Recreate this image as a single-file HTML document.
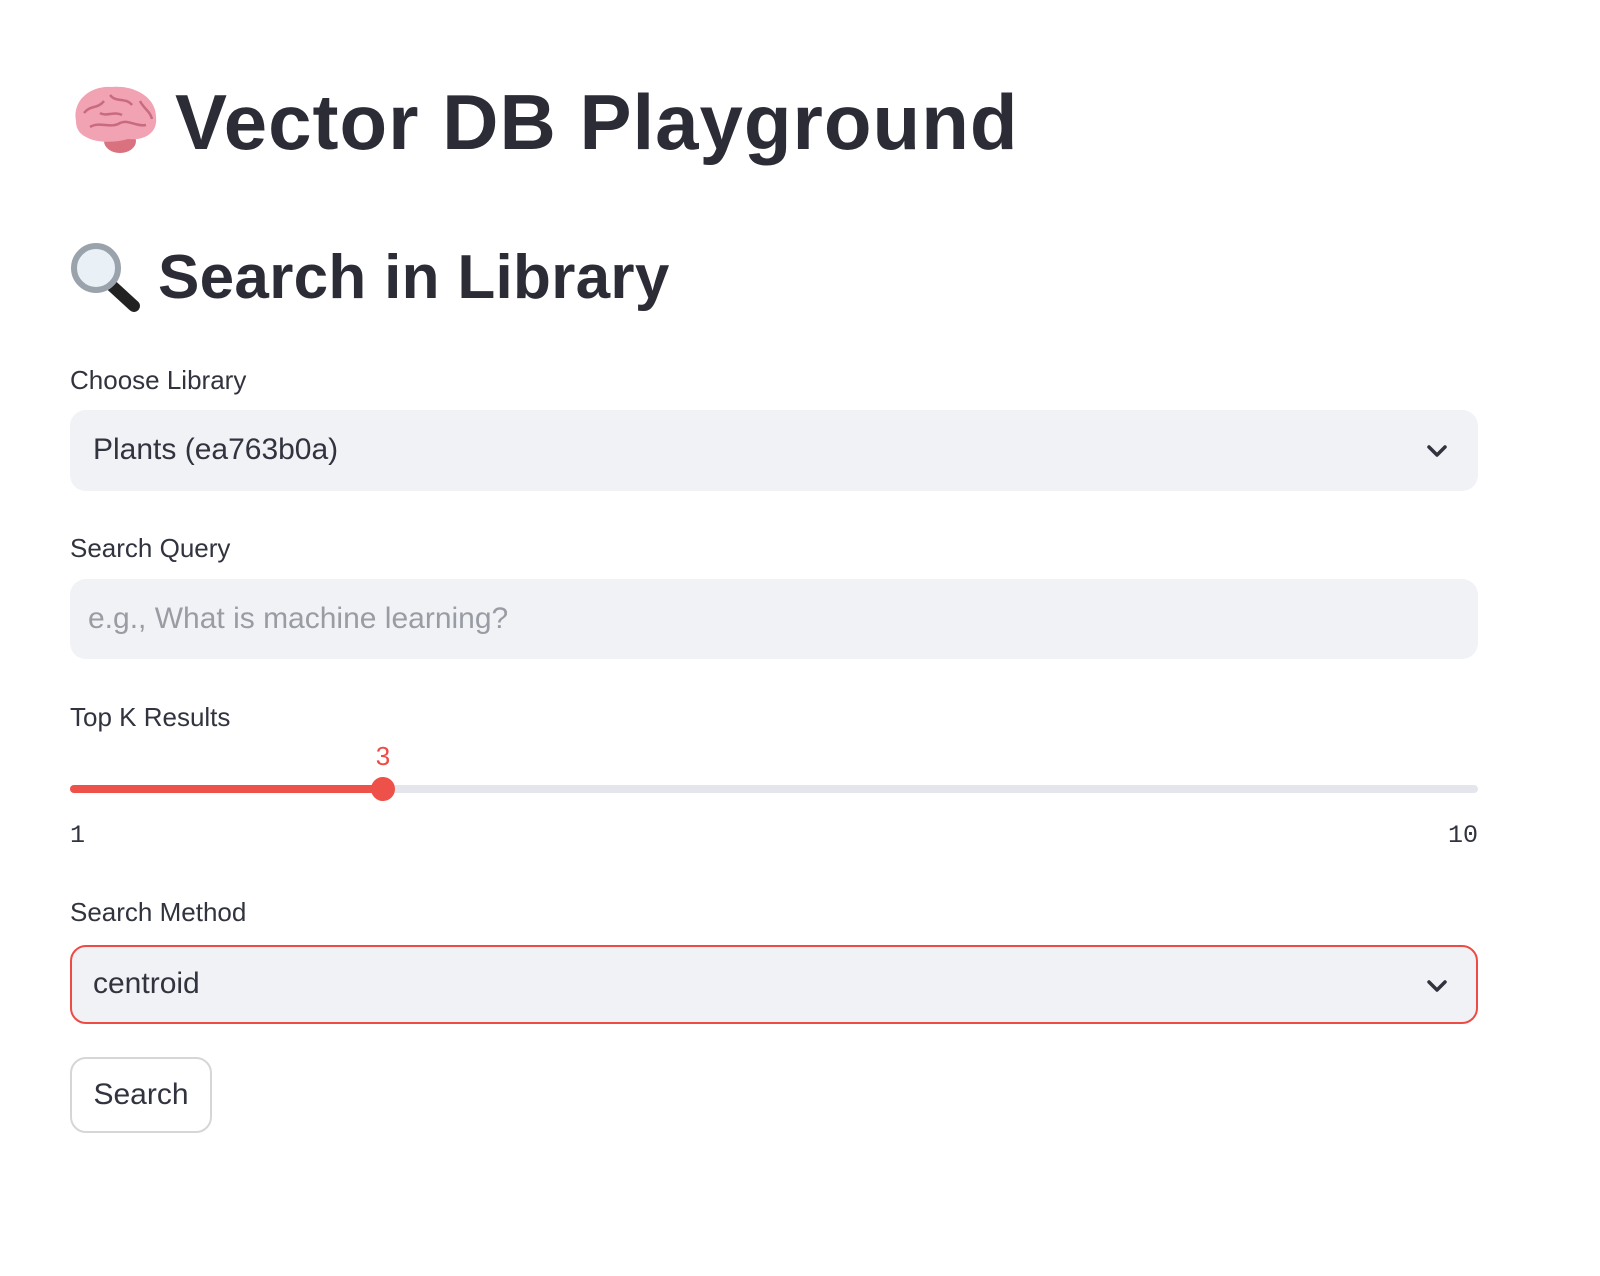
<!DOCTYPE html>
<html><head><meta charset="utf-8">
<style>
html,body{margin:0;padding:0;background:#fff;width:1600px;height:1276px;overflow:hidden;}
body{font-family:"Liberation Sans",sans-serif;color:#31333f;position:relative;}
.a{position:absolute;}
h1{position:absolute;left:175px;top:72px;margin:0;font-size:78px;font-weight:700;letter-spacing:1px;line-height:100px;color:#2b2c36;}
h2{position:absolute;left:158px;top:238px;margin:0;font-size:62px;font-weight:700;letter-spacing:0.3px;line-height:80px;color:#2b2c36;}
.lbl{position:absolute;left:70px;font-size:26px;line-height:30px;color:#31333f;}
.box{position:absolute;left:70px;width:1408px;background:#f0f2f6;border-radius:16px;box-sizing:border-box;}
.val{position:absolute;left:23px;font-size:30px;line-height:36px;color:#31333f;}
.chev{position:absolute;right:30px;}
.mono{font-family:"Liberation Mono",monospace;font-size:25px;color:#31333f;position:absolute;}
</style></head><body>

<svg class="a" style="left:70px;top:83px" width="88" height="72" viewBox="0 0 88 72">
 <ellipse cx="50" cy="58" rx="16" ry="12" fill="#d9717f"/>
 <path d="M6 38 C2 18 20 2 42 4 C64 2 86 14 86 34 C88 50 74 58 58 56 C44 60 26 60 16 54 C8 50 6 44 6 38Z" fill="#f1a2b3"/>
 <path d="M14 30 C20 22 28 26 34 18 M40 12 C46 20 56 14 62 22 M70 18 C74 26 80 28 82 36 M20 44 C30 38 40 46 50 40 C58 36 66 44 76 42 M30 30 C36 34 44 28 52 32" stroke="#c96b80" stroke-width="2.5" fill="none"/>
</svg>
<h1>Vector DB Playground</h1>

<svg class="a" style="left:70px;top:242px" width="72" height="70" viewBox="0 0 72 70">
 <path d="M40 42 L64 64" stroke="#222" stroke-width="12" stroke-linecap="round"/>
 <circle cx="26" cy="26" r="22" fill="#e9f1f6" stroke="#9aa3ab" stroke-width="6"/>
</svg>
<h2>Search in Library</h2>

<div class="lbl" style="top:365px">Choose Library</div>
<div class="box" style="top:410px;height:81px">
 <div class="val" style="top:22px">Plants (ea763b0a)</div>
 <svg class="chev" style="top:34px" width="22" height="14" viewBox="0 0 22 14"><path d="M3 3 L11 11 L19 3" stroke="#31333f" stroke-width="3.5" fill="none" stroke-linecap="round" stroke-linejoin="round"/></svg>
</div>

<div class="lbl" style="top:533px">Search Query</div>
<div class="box" style="top:579px;height:80px">
 <div class="val" style="left:18px;top:22px;color:#9a9ca4">e.g., What is machine learning?</div>
</div>

<div class="lbl" style="top:702px">Top K Results</div>
<div class="a" style="left:372px;top:741px;width:22px;text-align:center;font-size:26px;line-height:30px;color:#ef4b45">3</div>
<div class="a" style="left:70px;top:785px;width:1408px;height:8px;border-radius:4px;background:#e4e6ec"></div>
<div class="a" style="left:70px;top:785px;width:313px;height:8px;border-radius:4px;background:#ee5149"></div>
<div class="a" style="left:371px;top:777px;width:24px;height:24px;border-radius:50%;background:#ee5149"></div>
<div class="mono" style="left:70px;top:821px">1</div>
<div class="mono" style="right:122px;top:821px">10</div>

<div class="lbl" style="top:897px">Search Method</div>
<div class="box" style="top:945px;height:79px;border:2px solid #ee4b45">
 <div class="val" style="left:21px;top:19px">centroid</div>
 <svg class="chev" style="right:28px;top:32px" width="22" height="14" viewBox="0 0 22 14"><path d="M3 3 L11 11 L19 3" stroke="#31333f" stroke-width="3.5" fill="none" stroke-linecap="round" stroke-linejoin="round"/></svg>
</div>

<div class="a" style="left:70px;top:1057px;width:142px;height:76px;box-sizing:border-box;border:2px solid #d6d6d9;border-radius:16px;text-align:center;line-height:72px;font-size:30px;color:#31333f">Search</div>

</body></html>
